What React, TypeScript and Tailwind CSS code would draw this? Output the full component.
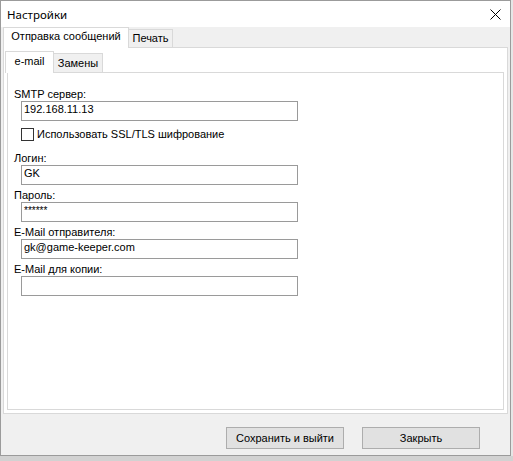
import React from "react";

const ui = { fontFamily: '"Liberation Sans", Arial, sans-serif' };

function Tab({ label, active, width, inactiveBg = "bg-[#f0f0f0]" }: { label: string; active?: boolean; width: string; inactiveBg?: string }) {
  if (active) {
    return (
      <div className={`${width} h-[21px] -mb-px relative z-10 bg-white border border-b-0 border-[#d9d9d9] pt-[2px] text-center text-[11px] leading-[13px] text-black`}>
        {label}
      </div>
    );
  }
  return (
    <div className={`${width} h-[18px] ${inactiveBg} border border-b-0 border-l-0 border-[#d9d9d9] pt-[2px] text-center text-[11px] leading-[13px] text-black`}>
      {label}
    </div>
  );
}

function Field({ label, value, password, top }: { label: string; value?: string; password?: boolean; top: string }) {
  return (
    <div className={top}>
      <div className="pl-[6px] h-[13px] text-[11px] leading-[13px] text-black whitespace-nowrap">{label}</div>
      <div className="ml-[13px] w-[277px] h-[20px] border border-[#9a9a9a] bg-white pl-[2px] pt-[1px] text-[11px] leading-[13px] text-black">
        {password ? <span className="text-[10px]">******</span> : value}
      </div>
    </div>
  );
}

export default function App() {
  return (
    <div className="w-[513px] h-[461px] bg-[#cdcdcd] overflow-hidden flex flex-col" style={ui}>
      <div className="flex">
        {/* dialog window */}
        <div className="w-[511px] h-[456px] border border-[#9b9b9b] bg-[#f0f0f0] flex flex-col">
          {/* title bar */}
          <div className="h-[26px] bg-white flex items-center justify-between pl-[6px] pr-[9px]">
            <span className="text-[11.5px] leading-[16px] text-black pt-[1px]" style={{ fontFamily: '"Noto Sans", "Open Sans", sans-serif' }}>
              Настройки
            </span>
            <svg width="11" height="11" viewBox="0 0 11 11" className="mt-[1px]">
              <path d="M0.5 0.5 L10.5 10.5 M10.5 0.5 L0.5 10.5" stroke="#000" strokeWidth="1" fill="none" />
            </svg>
          </div>

          {/* body */}
          <div className="flex-1 pl-[2px] pr-[2px] flex flex-col">
            {/* outer tabs */}
            <div className="h-[20px] flex items-end">
              <Tab label="Отправка сообщений" active width="w-[126px]" />
              <Tab label="Печать" width="w-[44px]" />
            </div>
            <div className="w-[505px] h-[367px] border border-[#d9d9d9] bg-white pt-[3px] pb-[3px] flex flex-col">
              {/* inner tabs */}
              <div className="h-[21px] flex items-end pl-[1px]">
                <div className="w-[49px] h-[22px] -mb-px relative z-10 bg-white border border-b-0 border-[#d9d9d9] pt-[3px] text-center text-[11px] leading-[13px] text-black">
                  e-mail
                </div>
                <div className="w-[49px] h-[19px] bg-[#f0f0f0] border border-b-0 border-l-0 border-[#d9d9d9] pt-[3px] text-center text-[11px] leading-[13px] text-black">
                  Замены
                </div>
              </div>
              <div className="mx-[3px] h-[338px] border border-[#d9d9d9] bg-white pt-[15px]">
                <Field label="SMTP сервер:" value="192.168.11.13" top="" />
                <label className="mt-[7px] ml-[13px] flex items-center gap-[3px] h-[13px] text-[11px] leading-[13px] text-black">
                  <span className="w-[13px] h-[13px] border border-[#333333] bg-white shrink-0" />
                  <span className="whitespace-nowrap">Использовать SSL/TLS шифрование</span>
                </label>
                <Field label="Логин:" value="GK" top="mt-[11px]" />
                <Field label="Пароль:" password top="mt-[4px]" />
                <Field label="E-Mail отправителя:" value="gk@game-keeper.com" top="mt-[4px]" />
                <Field label="E-Mail для копии:" value="" top="mt-[4px]" />
              </div>
            </div>

            {/* buttons */}
            <div className="mt-[13px] flex justify-end gap-[18px] pr-[28px]">
              <button className="w-[118px] h-[22px] bg-[#e1e1e1] border border-[#adadad] text-[11px] leading-[13px] text-black">
                Сохранить и выйти
              </button>
              <button className="w-[118px] h-[22px] bg-[#e1e1e1] border border-[#adadad] text-[11px] leading-[13px] text-black">
                Закрыть
              </button>
            </div>
          </div>
        </div>
        {/* background strip on the right */}
        <div className="w-[2px] h-[456px] bg-[#e6e6e6]" />
      </div>
      <div className="flex-1 bg-[#d2d2d2]" />
    </div>
  );
}
